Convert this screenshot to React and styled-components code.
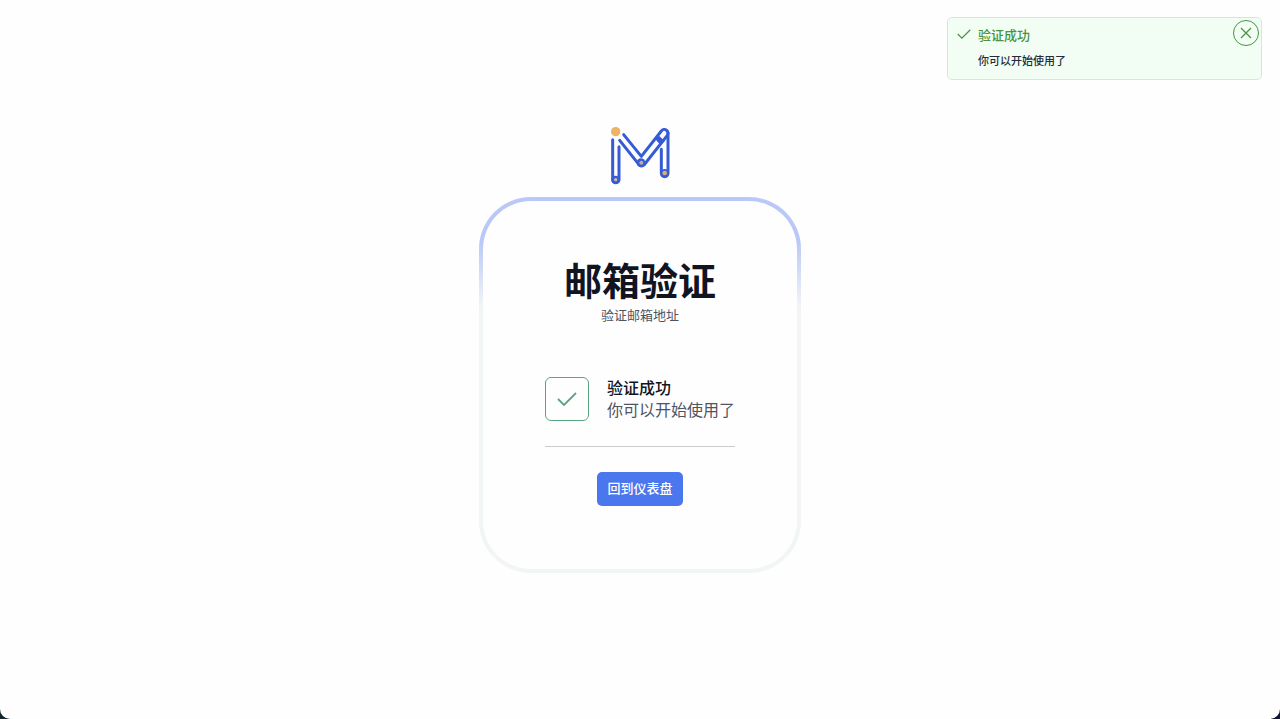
import React from "react";
import styled, { createGlobalStyle } from "styled-components";

const GlobalStyle = createGlobalStyle`
  *, *::before, *::after { box-sizing: border-box; }
  body {
    margin: 0;
    background: linear-gradient(90deg, #14262f, #12152e);
    font-family: "Noto Sans", "Noto Sans CJK SC", sans-serif;
    color: #12141f;
  }
  h1, h2, p { margin: 0; }
`;

const Page = styled.main`
  min-height: 100vh;
  padding: 126px 16px 48px;
  display: flex;
  flex-direction: column;
  align-items: center;
  gap: 12px;
  background: #fefefe;
  border-radius: 0 0 10px 10px;
`;

const Card = styled.section`
  padding: 60px 62px 63px;
  display: flex;
  flex-direction: column;
  align-items: center;
  border: 4px solid transparent;
  border-radius: 52px;
  background:
    linear-gradient(#fefefe, #fefefe) padding-box,
    linear-gradient(#b9c8f8 0, #b9c8f8 44px, #f2f5f6 110px) border-box;
`;

const Title = styled.h1`
  font-family: "Noto Sans CJK SC", sans-serif;
  font-size: 38px;
  line-height: 36px;
  font-weight: 700;
`;

const Subtitle = styled.p`
  margin-top: 8px;
  font-size: 13px;
  line-height: 20px;
  color: #50545f;
`;

const Status = styled.div`
  margin-top: 52px;
  padding-bottom: 25px;
  display: flex;
  align-items: center;
  gap: 18px;
  border-bottom: 1px solid #c9cbcf;
`;

const StatusIcon = styled.div`
  width: 44px;
  height: 44px;
  display: grid;
  place-items: center;
  border: 1px solid #58a582;
  border-radius: 6px;
  color: #58a582;
`;

const StatusTitle = styled.h2`
  font-size: 16px;
  line-height: 22px;
  font-weight: 500;
`;

const StatusText = styled.p`
  font-size: 16px;
  line-height: 22px;
  color: #50545f;
`;

const PrimaryButton = styled.button`
  height: 34px;
  margin-top: 25px;
  padding: 0 10px 2px;
  border: 0;
  border-radius: 5px;
  background: #4a76ee;
  color: #fff;
  font: 500 13px/20px "Noto Sans CJK SC", sans-serif;
  cursor: pointer;
`;

const Toast = styled.aside`
  position: fixed;
  top: 17px;
  right: 18px;
  width: 315px;
  max-width: calc(100vw - 36px);
  padding: 7px 2px 10px 9px;
  display: flex;
  align-items: flex-start;
  border: 1px solid #c5eee0;
  border-radius: 5px;
  background: #f2fef4;
  color: #489441;
`;

const ToastBody = styled.div`
  flex: 1;
  padding-left: 7px;
`;

const ToastTitle = styled.p`
  font-size: 13px;
  line-height: 20px;
  font-weight: 500;
`;

const ToastText = styled.p`
  margin-top: 8px;
  font-size: 11px;
  line-height: 16px;
  font-weight: 500;
  color: #252c3c;
`;

const CloseButton = styled.button`
  width: 26px;
  height: 26px;
  margin-top: -5px;
  padding: 0;
  display: grid;
  place-items: center;
  border: 1px solid #489441;
  border-radius: 50%;
  background: transparent;
  color: inherit;
  cursor: pointer;
`;

function Logo() {
  return (
    <svg width="60" height="59" viewBox="30 33 180 177" role="img" aria-label="M" fill="none" strokeLinecap="round">
      <g stroke="#355cd5" strokeWidth="9" strokeLinejoin="round">
        <path d="M38 74V195A10 10 0 0 0 57 195V95" />
        <path d="M59 76L114 145A11 11 0 0 0 132 150L202 61A11 11 0 0 0 184 48L124 124L71 59" />
        <path d="M204 55V175A10 10 0 0 1 184 175V103" />
      </g>
      <g fill="#355cd5">
        <circle cx="47" cy="195" r="13" />
        <circle cx="123" cy="143" r="13" />
        <circle cx="194" cy="175" r="13" />
        <path d="M166 73L177 62L194 78L182 91Z" />
      </g>
      <circle cx="47" cy="50" r="14" fill="#eeb364" />
      <circle cx="47" cy="194" r="5" fill="#d1b5ac" />
      <circle cx="124" cy="143" r="6" fill="#c5a6a5" />
      <circle cx="194" cy="174" r="7" fill="#dfae69" />
    </svg>
  );
}

function Check({ width, height }) {
  return (
    <svg width={width} height={height} viewBox="0 0 20 14" fill="none" stroke="currentColor" strokeWidth="1.8" aria-hidden="true">
      <path d="M1 7L7 13L19 1" />
    </svg>
  );
}

export default function App() {
  return (
    <>
      <GlobalStyle />
      <Page lang="zh-CN">
        <Logo />
        <Card>
          <Title>邮箱验证</Title>
          <Subtitle>验证邮箱地址</Subtitle>
          <Status>
            <StatusIcon>
              <Check width={20} height={14} />
            </StatusIcon>
            <div>
              <StatusTitle>验证成功</StatusTitle>
              <StatusText>你可以开始使用了</StatusText>
            </div>
          </Status>
          <PrimaryButton type="button">回到仪表盘</PrimaryButton>
        </Card>
        <Toast role="status">
          <Check width={14} height={18} />
          <ToastBody>
            <ToastTitle>验证成功</ToastTitle>
            <ToastText>你可以开始使用了</ToastText>
          </ToastBody>
          <CloseButton type="button" aria-label="关闭">
            <svg width="12" height="12" viewBox="0 0 12 12" stroke="currentColor" strokeWidth="1.3" aria-hidden="true">
              <path d="M1 1L11 11M11 1L1 11" />
            </svg>
          </CloseButton>
        </Toast>
      </Page>
    </>
  );
}
